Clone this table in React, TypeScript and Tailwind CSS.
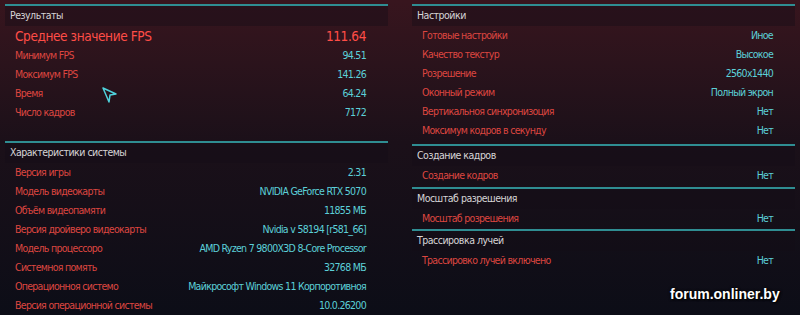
import React from "react";

type Row = [string, string];

const results: Row[] = [
  ["Минимум FPS", "94.51"],
  ["Моксимум FPS", "141.26"],
  ["Время", "64.24"],
  ["Число кадров", "7172"],
];

const system: Row[] = [
  ["Версия игры", "2.31"],
  ["Модель видеокарты", "NVIDIA GeForce RTX 5070"],
  ["Объём видеопамяти", "11855 МБ"],
  ["Версия дройверо видеокарты", "Nvidia v 58194 [r581_66]"],
  ["Модель процессоро", "AMD Ryzen 7 9800X3D 8-Core Processor"],
  ["Системноя помять", "32768 МБ"],
  ["Операционноя системо", "Майкрософт Windows 11 Корпоротивноя"],
  ["Версия операционной системы", "10.0.26200"],
];

const settings: Row[] = [
  ["Готовые настройки", "Иное"],
  ["Качество текстур", "Высокое"],
  ["Розрешение", "2560x1440"],
  ["Оконный режим", "Полный экрон"],
  ["Вертикальноя синхронизоция", "Нет"],
  ["Моксимум кодров в секунду", "Нет"],
];

const font = { fontFamily: '"DejaVu Sans Condensed", "Liberation Sans", sans-serif' };

function Header({ title }: { title: string }) {
  return (
    <>
      <div className="h-[2px] bg-[#2f8d92]" />
      <div className="h-[20px] flex items-center pl-[5px] bg-[#140d16]/40 text-[10.5px] tracking-[-0.5px] text-[#d6d4d6]">
        {title}
      </div>
    </>
  );
}

function Rows({ rows }: { rows: Row[] }) {
  return (
    <div>
      {rows.map(([label, value]) => (
        <div key={label} className="h-[19px] flex items-center justify-between pl-[10px] pr-[22px] text-[10.5px] tracking-[-0.7px]">
          <span className="text-[#dd4640]">{label}</span>
          <span className="text-[#5cd0d8]">{value}</span>
        </div>
      ))}
    </div>
  );
}

export default function App() {
  return (
    <div
      className="w-[800px] h-[315px] overflow-hidden relative bg-linear-to-b from-[#38151e] via-[#1b1019] via-45% to-[#0c0d17] flex gap-[24px] px-[5px] pt-[4px]"
      style={font}
    >
      <div className="w-[383px] flex flex-col">
        <div className="h-[140px] relative">
          <Header title="Результаты" />
          <div className="h-[20px] flex items-center justify-between pl-[10px] pr-[22px] text-[13.5px] tracking-[-0.4px] text-[#ff4d47]">
            <span>Среднее значение FPS</span>
            <span>111.64</span>
          </div>
          <Rows rows={results} />
          <svg className="absolute left-[93px] top-[80px]" width="20" height="20" viewBox="0 0 20 20">
            <polygon points="5,4 18,10 12,11 11,18" fill="none" stroke="#4fd2dc" strokeWidth="1.5" strokeLinejoin="round" />
          </svg>
        </div>
        <Header title="Характеристики системы" />
        <Rows rows={system} />
      </div>

      <div className="w-[383px] flex flex-col">
        <div className="h-[140px]">
          <Header title="Настройки" />
          <Rows rows={settings} />
        </div>
        <Header title="Создание кадров" />
        <Rows rows={[["Создание кодров", "Нет"]]} />
        <div className="h-[2px]" />
        <Header title="Мосштаб разрешения" />
        <Rows rows={[["Мосштаб розрешения", "Нет"]]} />
        <div className="h-[1px]" />
        <Header title="Трассировка лучей" />
        <Rows rows={[["Трассировко лучей включено", "Нет"]]} />
      </div>

      <div
        className="absolute left-[670px] top-[284px] text-[14px] font-bold text-white [text-shadow:0_0_3px_#000,1px_1px_2px_#000]"
        style={{ fontFamily: '"Liberation Sans", Arial, sans-serif' }}
      >
        forum.onliner.by
      </div>
    </div>
  );
}
